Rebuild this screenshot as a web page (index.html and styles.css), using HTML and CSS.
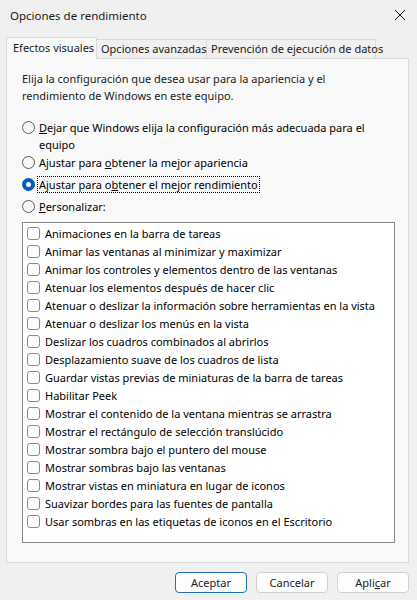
FILE: index.html
```html
<!DOCTYPE html>
<html lang="es">
<head>
<meta charset="utf-8">
<title>Opciones de rendimiento</title>
<link rel="stylesheet" href="styles.css">
</head>
<body>
<div class="window">
  <div class="titlebar">
    <span class="title">Opciones de rendimiento</span>
    <svg class="close" width="12" height="12" viewBox="0 0 12 12"><path d="M1 1 L11 11 M11 1 L1 11" stroke="#1a1a1a" stroke-width="1"/></svg>
  </div>
  <div class="tabs">
    <div class="tab active">Efectos visuales</div>
    <div class="tab">Opciones avanzadas</div>
    <div class="tab">Prevención de ejecución de datos</div>
  </div>
  <div class="panel">
    <p class="desc">Elija la configuración que desea usar para la apariencia y el rendimiento de Windows en este equipo.</p>
    <div class="radios">
      <div class="radio first"><span class="dot"></span><span class="label"><u>D</u>ejar que Windows elija la configuración más adecuada para el equipo</span></div>
      <div class="radio"><span class="dot"></span><span class="label">Ajustar para <u>o</u>btener la mejor apariencia</span></div>
      <div class="radio"><span class="dot checked"></span><span class="label focus">Ajustar para o<u>b</u>tener el mejor rendimiento</span></div>
      <div class="radio"><span class="dot"></span><span class="label"><u>P</u>ersonalizar:</span></div>
    </div>
    <div class="list">
      <div class="item"><span class="box"></span>Animaciones en la barra de tareas</div>
      <div class="item"><span class="box"></span>Animar las ventanas al minimizar y maximizar</div>
      <div class="item"><span class="box"></span>Animar los controles y elementos dentro de las ventanas</div>
      <div class="item"><span class="box"></span>Atenuar los elementos después de hacer clic</div>
      <div class="item"><span class="box"></span>Atenuar o deslizar la información sobre herramientas en la vista</div>
      <div class="item"><span class="box"></span>Atenuar o deslizar los menús en la vista</div>
      <div class="item"><span class="box"></span>Deslizar los cuadros combinados al abrirlos</div>
      <div class="item"><span class="box"></span>Desplazamiento suave de los cuadros de lista</div>
      <div class="item"><span class="box"></span>Guardar vistas previas de miniaturas de la barra de tareas</div>
      <div class="item"><span class="box"></span>Habilitar Peek</div>
      <div class="item"><span class="box"></span>Mostrar el contenido de la ventana mientras se arrastra</div>
      <div class="item"><span class="box"></span>Mostrar el rectángulo de selección translúcido</div>
      <div class="item"><span class="box"></span>Mostrar sombra bajo el puntero del mouse</div>
      <div class="item"><span class="box"></span>Mostrar sombras bajo las ventanas</div>
      <div class="item"><span class="box"></span>Mostrar vistas en miniatura en lugar de iconos</div>
      <div class="item"><span class="box"></span>Suavizar bordes para las fuentes de pantalla</div>
      <div class="item"><span class="box"></span>Usar sombras en las etiquetas de iconos en el Escritorio</div>
    </div>
  </div>
  <div class="buttons">
    <button class="btn default">Aceptar</button>
    <button class="btn">Cancelar</button>
    <button class="btn">Apli<u>c</u>ar</button>
  </div>
</div>
</body>
</html>
```
FILE: styles.css
```css
* { box-sizing: border-box; }
html, body { margin: 0; padding: 0; }
body {
  background: #f0f0f0;
  font-family: "Noto Sans", "DejaVu Sans", sans-serif;
  font-size: 11px;
  color: #000;
  width: 417px;
  height: 600px;
  overflow: hidden;
}
.window { display: flex; flex-direction: column; height: 600px; }
.titlebar {
  height: 30px;
  display: flex;
  align-items: center;
  justify-content: space-between;
  padding: 0 11px 0 10px;
  font-size: 11.5px;
  color: #1a1a1a;
}
.tabs {
  display: flex;
  align-items: flex-end;
  margin: 7px 0 0 6px;
  height: 21px;
  position: relative;
  z-index: 1;
}
.tab {
  height: 19px;
  line-height: 17px;
  padding: 0 4px;
  border: 1px solid #dadada;
  border-bottom: none;
  border-left: none;
  background: #f0f0f0;
  color: #1a1a1a;
  white-space: nowrap;
}
.tab.active {
  width: 91px;
  height: 22px;
  margin-bottom: -1px;
  background: #f9f9f9;
  border-left: 1px solid #dadada;
  padding: 0 6px;
  line-height: 19px;
}
.tab:nth-child(2) { width: 110px; }
.tab:nth-child(3) { width: 169px; }
.panel {
  margin: 0 8px 0 6px;
  height: 505px;
  background: #f9f9f9;
  border: 1px solid #dadada;
  padding: 11px 0 0 15px;
}
.desc {
  margin: 0;
  width: 330px;
  line-height: 17px;
  color: #1a1a1a;
}
.radios { margin-top: 15px; }
.radio {
  display: flex;
  align-items: flex-start;
  line-height: 15px;
  margin-bottom: 5px;
}
.radio.first { margin-bottom: 1px; }
.radio .dot {
  flex: none;
  width: 13px;
  height: 13px;
  border-radius: 50%;
  border: 1px solid #5c5c5c;
  background: #f7f7f7;
  margin: 2px 2px 0 0;
  position: relative;
}
.radio .dot.checked {
  border: none;
  background: #005fb8;
}
.radio .dot.checked::after {
  content: "";
  position: absolute;
  left: 4px;
  top: 4px;
  width: 5px;
  height: 5px;
  border-radius: 50%;
  background: #fff;
}
.radio .label { padding: 0 1px; border: 1px dotted transparent; }
.radio.first .label { width: 345px; line-height: 17px; border: none; padding: 0 2px; margin-top: 0; }
.radio .label.focus { border-color: #000; }
.list {
  margin-top: 7px;
  width: 373px;
  height: 321px;
  background: #fff;
  border: 1px solid #868686;
  padding: 0 0 0 4px;
}
.item {
  display: flex;
  align-items: center;
  height: 18px;
  white-space: nowrap;
}
.item:first-child { margin-top: 1px; }
.box {
  flex: none;
  width: 13px;
  height: 13px;
  border: 1px solid #8a8a8a;
  border-radius: 3px;
  background: #fff;
  margin-right: 5px;
}
.buttons {
  display: flex;
  justify-content: flex-end;
  gap: 9px;
  padding: 9px 8px 0 0;
}
.btn {
  width: 72px;
  height: 21px;
  padding: 0;
  font-family: inherit;
  font-size: 11px;
  color: #1a1a1a;
  background: #fdfdfd;
  border: 1px solid #d0d0d0;
  border-radius: 4px;
}
.btn.default { border-color: #1f6fbf; }
```
